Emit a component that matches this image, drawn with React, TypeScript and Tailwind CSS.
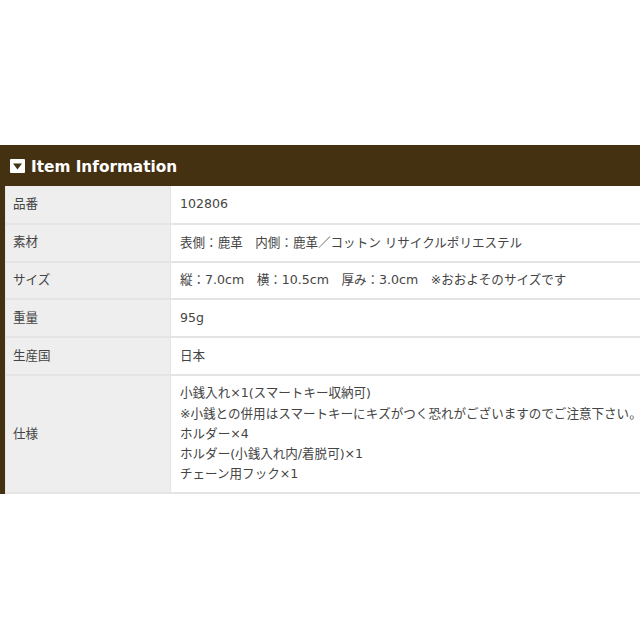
const rows: { label: string; lines: string[] }[] = [
  { label: "品番", lines: ["102806"] },
  { label: "素材", lines: ["表側：鹿革　内側：鹿革／コットン リサイクルポリエステル"] },
  { label: "サイズ", lines: ["縦：7.0cm　横：10.5cm　厚み：3.0cm　※おおよそのサイズです"] },
  { label: "重量", lines: ["95g"] },
  { label: "生産国", lines: ["日本"] },
  {
    label: "仕様",
    lines: [
      "小銭入れ×1(スマートキー収納可)",
      "※小銭との併用はスマートキーにキズがつく恐れがございますのでご注意下さい。",
      "ホルダー×4",
      "ホルダー(小銭入れ内/着脱可)×1",
      "チェーン用フック×1",
    ],
  },
];

export default function App() {
  return (
    <div className="h-[640px] w-[640px] overflow-hidden bg-white pt-[145px] font-['DejaVu_Sans','Noto_Sans_CJK_JP',sans-serif] text-[12.55px] text-[#444444]">
      <div className="flex h-[41px] items-center gap-[6px] bg-[#443112] pl-[10px]">
        <svg width="15" height="14" viewBox="0 0 15 14" className="shrink-0">
          <rect width="15" height="14" rx="1" fill="#ffffff" />
          <path d="M3 4.5h9L7.5 10.5z" fill="#443112" />
        </svg>
        <h2 className="pt-[3px] text-[15.3px] font-bold text-white">Item Information</h2>
      </div>
      <div className="w-[700px] border-l-[5px] border-[#443112]">
        <table className="w-full border-collapse">
          <tbody>
            {rows.map((r, i) => (
              <tr key={r.label} className="border-b-2 border-[#e4e4e4]">
                <th
                  className={`w-[165px] border-l border-r border-[#e4e4e4] bg-[#eeeeee] pl-[7px] text-left font-normal ${
                    i === 5 ? "h-[118px]" : "h-[37.8px]"
                  }`}
                >
                  {r.label}
                </th>
                <td className="whitespace-nowrap pl-[9px] leading-[20.2px]">
                  {r.lines.map((l) => (
                    <div key={l}>{l}</div>
                  ))}
                </td>
              </tr>
            ))}
          </tbody>
        </table>
      </div>
    </div>
  );
}
